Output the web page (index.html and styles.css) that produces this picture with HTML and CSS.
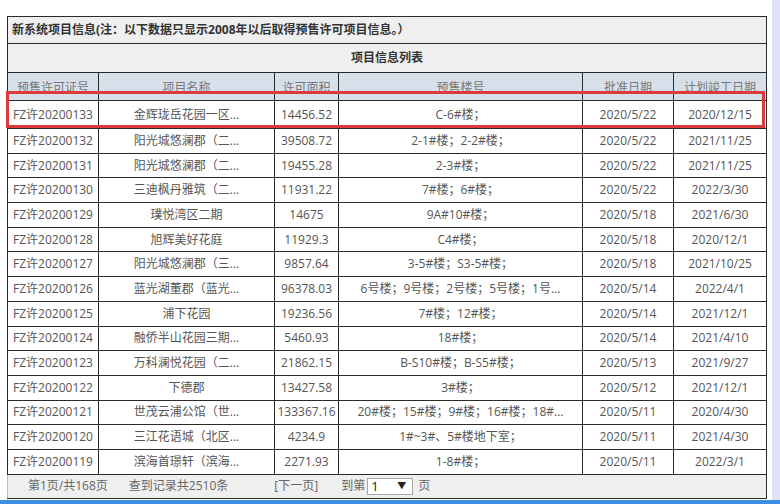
FILE: index.html
```html
<!DOCTYPE html>
<html lang="zh-CN">
<head>
<meta charset="utf-8">
<title>项目信息列表</title>
<link rel="stylesheet" href="styles.css">
</head>
<body>
<div class="screen">
  <div class="main">
    <div class="content">
      <table class="grid">
        <colgroup>
          <col class="c1"><col class="c2"><col class="c3"><col class="c4"><col class="c5"><col class="c6">
        </colgroup>
        <tr class="title-row"><td colspan="6">新系统项目信息(注：以下数据只显示2008年以后取得预售许可项目信息。）</td></tr>
        <tr class="caption-row"><td colspan="6">项目信息列表</td></tr>
        <tr class="head-row"><th>预售许可证号</th><th>项目名称</th><th>许可面积</th><th>预售楼号</th><th>批准日期</th><th>计划竣工日期</th></tr>
        <tr class="data-row first"><td>FZ许20200133</td><td>金辉珑岳花园一区...</td><td>14456.52</td><td>C-6#楼；</td><td>2020/5/22</td><td>2020/12/15</td></tr>
        <tr class="data-row"><td>FZ许20200132</td><td>阳光城悠澜郡（二...</td><td>39508.72</td><td>2-1#楼；2-2#楼；</td><td>2020/5/22</td><td>2021/11/25</td></tr>
        <tr class="data-row"><td>FZ许20200131</td><td>阳光城悠澜郡（二...</td><td>19455.28</td><td>2-3#楼；</td><td>2020/5/22</td><td>2021/11/25</td></tr>
        <tr class="data-row"><td>FZ许20200130</td><td>三迪枫丹雅筑（二...</td><td>11931.22</td><td>7#楼；6#楼；</td><td>2020/5/22</td><td>2022/3/30</td></tr>
        <tr class="data-row"><td>FZ许20200129</td><td>璞悦湾区二期</td><td>14675</td><td>9A#10#楼；</td><td>2020/5/18</td><td>2021/6/30</td></tr>
        <tr class="data-row"><td>FZ许20200128</td><td>旭辉美好花庭</td><td>11929.3</td><td>C4#楼；</td><td>2020/5/18</td><td>2020/12/1</td></tr>
        <tr class="data-row"><td>FZ许20200127</td><td>阳光城悠澜郡（三...</td><td>9857.64</td><td>3-5#楼；S3-5#楼；</td><td>2020/5/18</td><td>2021/10/25</td></tr>
        <tr class="data-row"><td>FZ许20200126</td><td>蓝光湖董郡（蓝光...</td><td>96378.03</td><td>6号楼；9号楼；2号楼；5号楼；1号...</td><td>2020/5/14</td><td>2022/4/1</td></tr>
        <tr class="data-row"><td>FZ许20200125</td><td>浦下花园</td><td>19236.56</td><td>7#楼；12#楼；</td><td>2020/5/14</td><td>2021/12/1</td></tr>
        <tr class="data-row"><td>FZ许20200124</td><td>融侨半山花园三期...</td><td>5460.93</td><td>18#楼；</td><td>2020/5/14</td><td>2021/4/10</td></tr>
        <tr class="data-row"><td>FZ许20200123</td><td>万科澜悦花园（二...</td><td>21862.15</td><td>B-S10#楼；B-S5#楼；</td><td>2020/5/13</td><td>2021/9/27</td></tr>
        <tr class="data-row"><td>FZ许20200122</td><td>下德郡</td><td>13427.58</td><td>3#楼；</td><td>2020/5/12</td><td>2021/12/1</td></tr>
        <tr class="data-row"><td>FZ许20200121</td><td>世茂云浦公馆（世...</td><td>133367.16</td><td>20#楼；15#楼；9#楼；16#楼；18#...</td><td>2020/5/11</td><td>2020/4/30</td></tr>
        <tr class="data-row"><td>FZ许20200120</td><td>三江花语城（北区...</td><td>4234.9</td><td>1#~3#、5#楼地下室；</td><td>2020/5/11</td><td>2021/4/30</td></tr>
        <tr class="data-row"><td>FZ许20200119</td><td>滨海首璟轩（滨海...</td><td>2271.93</td><td>1-8#楼；</td><td>2020/5/11</td><td>2022/3/1</td></tr>
        <tr class="pager-row"><td colspan="6">
          <div class="pager">
            <span class="p-page">第1页/共168页</span>
            <span class="p-total">查到记录共2510条</span>
            <span class="p-next">[下一页]</span>
            <span class="p-goto">到第</span>
            <span class="p-select"><span>1</span><span class="arrow">▼</span></span>
            <span class="p-unit">页</span>
          </div>
        </td></tr>
      </table>
      <div class="mark"></div>
    </div>
    <div class="rail"></div>
  </div>
  <div class="bar"></div>
</div>
</body>
</html>
```
FILE: styles.css
```css
html, body {
  margin: 0;
  padding: 0;
  background: #fff;
}
body {
  font-family: "Open Sans", "Noto Sans CJK SC", sans-serif;
  font-size: 12px;
  color: #555;
}
.screen {
  width: 780px;
  height: 504px;
  display: flex;
  flex-direction: column;
  overflow: hidden;
}
.main {
  flex: 1;
  display: flex;
  min-height: 0;
}
.content {
  flex: 1;
  position: relative;
  padding: 16px 0 0 7px;
}
.rail {
  width: 8px;
  background: #dde2f4;
}
.bar {
  height: 4px;
  background: #3a8ee4;
}
.grid {
  border-collapse: collapse;
  table-layout: fixed;
  width: 759px;
  border: 1px solid #2a2a2a;
}
.c1 { width: 91px; }
.c2 { width: 176px; }
.c3 { width: 64px; }
.c4 { width: 244px; }
.c5 { width: 91px; }
.c6 { width: 93px; }
.grid td, .grid th {
  border: 1px solid #2a2a2a;
  padding: 0 1px;
  text-align: center;
  white-space: nowrap;
  overflow: hidden;
  line-height: 16px;
}
.title-row td {
  background: #efefef;
  height: 26px;
  text-align: left;
  padding-left: 4px;
  font-weight: bold;
  color: #333;
}
.caption-row td {
  background: #efefef;
  height: 28px;
  font-weight: bold;
  color: #333;
}
.head-row th {
  background: #d7e0ea;
  height: 25px;
  padding-top: 2px;
  font-weight: normal;
  color: #777;
}
.data-row td {
  height: 23.7px;
  background: #fff;
}
.data-row.first td {
  height: 27px;
}
.pager-row td {
  background: #efefef;
  height: 23px;
  text-align: left;
  color: #666;
  border-color: #bbb #2a2a2a #2a2a2a #bbb;
}
.pager {
  display: flex;
  align-items: center;
  padding-left: 19px;
}
.p-total { margin-left: 21px; }
.p-next { margin-left: 46px; }
.p-goto { margin-left: 23px; }
.p-select {
  margin-left: 2px;
  width: 46px;
  height: 17px;
  box-sizing: border-box;
  border: 1px solid #a8a8a8;
  background: #fff;
  display: flex;
  align-items: center;
  justify-content: space-between;
  padding: 0 6px 0 3px;
  color: #222;
  font-size: 13px;
}
.p-select .arrow {
  font-size: 9px;
  color: #222;
}
.p-unit { margin-left: 5px; }
.mark {
  position: absolute;
  left: 6px;
  top: 91px;
  width: 759px;
  height: 37px;
  box-sizing: border-box;
  border: 3px solid #dd3a3d;
}
```
